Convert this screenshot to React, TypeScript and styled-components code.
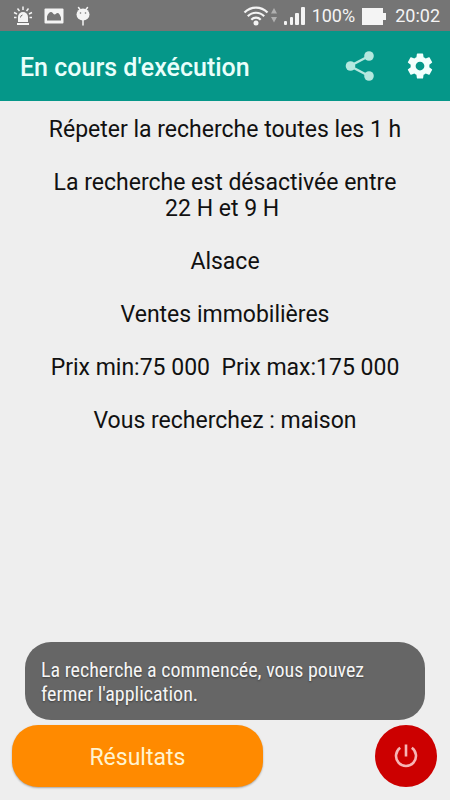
import React from "react";
import styled, { createGlobalStyle } from "styled-components";

const GlobalStyle = createGlobalStyle`
  *, *::before, *::after { box-sizing: border-box; }
  body {
    margin: 0;
    background: #eeeeee;
    font-family: Roboto, "Noto Sans", sans-serif;
  }
`;

const Screen = styled.div`
  position: relative;
  display: flex;
  flex-direction: column;
  min-height: 100vh;
  background: #eeeeee;
`;

const StatusBar = styled.div`
  display: flex;
  align-items: center;
  justify-content: space-between;
  height: 31px;
  padding: 1px 10px 0 13px;
  background: #757575;
  color: #f4f4f4;
  font-size: 18px;
  line-height: 30px;
`;

const StatusGroup = styled.div<{ $gap: number }>`
  display: flex;
  align-items: center;
  gap: ${({ $gap }) => $gap}px;
`;

const StatusText = styled.span<{ $before?: number }>`
  margin-left: ${({ $before = 0 }) => $before}px;
`;

const Glyph = styled.svg`
  display: block;
  flex: none;
`;

const AppBar = styled.header`
  display: flex;
  align-items: center;
  height: 70px;
  padding: 0 10px 0 20px;
  background: #059789;
`;

const Title = styled.h1`
  flex: 1;
  margin: 0;
  padding-top: 4px;
  color: #e9fffb;
  font-size: 25px;
  font-weight: 500;
  line-height: 32px;
`;

const ActionButton = styled.button<{ $tint: string }>`
  display: grid;
  place-items: center;
  width: 40px;
  height: 40px;
  margin-left: 20px;
  padding: 0;
  border: 0;
  background: none;
  color: ${({ $tint }) => $tint};
  cursor: pointer;
`;

const Summary = styled.main`
  display: flex;
  flex: 1;
  flex-direction: column;
  gap: 27px;
  padding: 16px 44px 0;
  color: #111111;
  font-size: 23px;
  line-height: 26px;
  text-align: center;
`;

const Line = styled.p`
  margin: 0;
  white-space: pre-wrap;
`;

const BottomBar = styled.footer`
  display: flex;
  align-items: center;
  justify-content: space-between;
  padding: 0 13px 13px 12px;
`;

const ResultsButton = styled.button`
  width: 59%;
  height: 62px;
  padding: 4px 0 0;
  border: 0;
  border-radius: 26px;
  background: #ff8a00;
  box-shadow: 0 1px 2px rgba(0, 0, 0, 0.3);
  color: #fff3d0;
  font-family: inherit;
  font-size: 23px;
  line-height: 28px;
  cursor: pointer;
`;

const PowerButton = styled.button`
  display: grid;
  place-items: center;
  width: 62px;
  height: 62px;
  padding: 0;
  border: 0;
  border-radius: 50%;
  background: #cc0000;
  color: #f6b5b5;
  cursor: pointer;
`;

const Toast = styled.div`
  position: absolute;
  right: 25px;
  bottom: 80px;
  left: 25px;
  padding: 16px 50px 14px 16px;
  border-radius: 26px;
  background: #666666;
  color: #f5f5f5;
  font-family: "Roboto Condensed", Roboto, sans-serif;
  font-size: 20px;
  line-height: 24px;
  text-shadow: 0 1px 2px rgba(0, 0, 0, 0.4);
`;

const AlarmIcon = () => (
  <Glyph width="20" height="20" viewBox="0 0 20 20" fill="currentColor" aria-hidden="true">
    <path d="M5 16v-5a5 5 0 0 1 10 0v5z" />
    <path d="M4 17h12v2H4z" />
    <path
      d="M10 0.500v3.500M4.500 2.500l2 2.500M15.500 2.500l-2 2.500M1 6.500l3 1.500M19 6.500l-3 1.500M1 11.500h2.500M16.500 11.500H19"
      stroke="currentColor"
      strokeWidth="1.500"
    />
    <path d="M7.500 11.500a2.500 2.500 0 0 1 2-2.500" fill="none" stroke="#757575" />
  </Glyph>
);

const PictureIcon = () => (
  <Glyph width="20" height="16" viewBox="0 0 20 16" aria-hidden="true">
    <rect x="0.500" y="0.500" width="19" height="15" rx="1" fill="currentColor" />
    <path
      d="M3 12.500V8.500C4 5.500 5.500 4 7 4c1.500 0 2 2 3.500 2.500C12 6.500 12 5 13.500 5S16 7 17 9.500v3z"
      fill="#757575"
    />
  </Glyph>
);

const RobotIcon = () => (
  <Glyph width="16" height="20" viewBox="0 0 16 20" aria-hidden="true">
    <path
      d="M3.500 1.500l1.500 2M12.500 1.500l-1.500 2M8 14v5"
      stroke="currentColor"
      strokeWidth="1.500"
      strokeLinecap="round"
    />
    <ellipse cx="8" cy="8.500" rx="6.500" ry="6" fill="currentColor" />
    <circle cx="5.500" cy="7" r="0.800" fill="#757575" />
    <circle cx="10.500" cy="7" r="0.800" fill="#757575" />
  </Glyph>
);

const WifiIcon = () => (
  <Glyph width="34" height="22" viewBox="0 0 34 22" fill="none" aria-hidden="true">
    <path
      d="M1.500 7.500C8 1 18 1 24.500 7.500M4.800 11.200c4.500-4.600 11.900-4.600 16.400 0M8.300 14.700c2.600-2.700 6.800-2.700 9.400 0"
      stroke="currentColor"
      strokeWidth="2.200"
    />
    <circle cx="13" cy="18" r="2.500" fill="currentColor" />
    <path d="M31 3l3 5.500h-6zM31 17.500l3-5.500h-6z" fill="#b0b0b0" />
  </Glyph>
);

const SignalIcon = () => (
  <Glyph width="21" height="18" viewBox="0 0 21 18" fill="currentColor" aria-hidden="true">
    <rect x="0" y="14" width="3" height="4" rx="1" />
    <rect x="6" y="10" width="3" height="8" rx="1" />
    <rect x="11" y="6" width="4" height="12" rx="1" />
    <rect x="17" y="0" width="4" height="18" rx="1" />
  </Glyph>
);

const BatteryIcon = () => (
  <Glyph width="24" height="17" viewBox="0 0 24 17" fill="currentColor" aria-hidden="true">
    <path d="M0 0h21v5h3v7h-3v5H0z" />
  </Glyph>
);

const ShareIcon = () => (
  <Glyph width="30" height="32" viewBox="0 0 30 32" aria-hidden="true">
    <path d="M24 6L5 16l19 10" fill="none" stroke="currentColor" strokeWidth="2.400" />
    <circle cx="5.500" cy="16" r="4.800" fill="currentColor" />
    <circle cx="24" cy="6" r="4.800" fill="currentColor" />
    <circle cx="24" cy="26" r="4.800" fill="currentColor" />
  </Glyph>
);

const GearIcon = () => (
  <Glyph width="30" height="30" viewBox="0 0 24 24" fill="currentColor" aria-hidden="true">
    <path d="M19.430 12.980c.04-.32.07-.64.07-.98s-.03-.66-.07-.98l2.110-1.650c.19-.15.24-.42.12-.64l-2-3.460c-.12-.22-.39-.3-.61-.22l-2.490 1c-.52-.4-1.080-.73-1.690-.98l-.38-2.650C14.460 2.180 14.250 2 14 2h-4c-.25 0-.46.18-.49.42l-.38 2.650c-.61.25-1.170.59-1.690.98l-2.490-1c-.23-.09-.49 0-.61.22l-2 3.460c-.13.22-.07.49.12.64l2.110 1.650c-.04.32-.07.65-.07.98s.03.66.07.98l-2.110 1.650c-.19.15-.24.42-.12.64l2 3.460c.12.22.39.3.61.22l2.490-1c.52.4 1.080.73 1.690.98l.38 2.650c.03.24.24.42.49.42h4c.25 0 .46-.18.49-.42l.38-2.650c.61-.25 1.170-.59 1.690-.98l2.490 1c.23.09.49 0 .61-.22l2-3.460c.12-.22.07-.49-.12-.64l-2.110-1.650zM12 15.500c-1.930 0-3.500-1.570-3.500-3.500s1.570-3.500 3.500-3.500 3.500 1.570 3.500 3.500-1.570 3.500-3.500 3.500z" />
  </Glyph>
);

const PowerIcon = () => (
  <Glyph width="24" height="24" viewBox="0 0 24 24" fill="none" aria-hidden="true">
    <path
      d="M12 0.500v12M6.200 3.800a10 10 0 1 0 11.600 0"
      stroke="currentColor"
      strokeWidth="2.600"
    />
  </Glyph>
);

const criteria = [
  "Répeter la recherche toutes les 1 h",
  "La recherche est désactivée entre 22 H et 9 H\u00a0",
  "Alsace",
  "Ventes immobilières",
  "Prix min:75 000  Prix max:175 000",
  "Vous recherchez : maison",
];

export default function App() {
  return (
    <>
      <GlobalStyle />
      <Screen>
        <StatusBar>
          <StatusGroup $gap={11}>
            <AlarmIcon />
            <PictureIcon />
            <RobotIcon />
          </StatusGroup>
          <StatusGroup $gap={7}>
            <WifiIcon />
            <SignalIcon />
            <StatusText>100%</StatusText>
            <BatteryIcon />
            <StatusText $before={2}>20:02</StatusText>
          </StatusGroup>
        </StatusBar>
        <AppBar>
          <Title>En cours d'exécution</Title>
          <ActionButton type="button" aria-label="Partager" $tint="#b5e8df">
            <ShareIcon />
          </ActionButton>
          <ActionButton type="button" aria-label="Paramètres" $tint="#f4fffd">
            <GearIcon />
          </ActionButton>
        </AppBar>
        <Summary>
          {criteria.map((text) => (
            <Line key={text}>{text}</Line>
          ))}
        </Summary>
        <BottomBar>
          <ResultsButton type="button">Résultats</ResultsButton>
          <PowerButton type="button" aria-label="Arrêter">
            <PowerIcon />
          </PowerButton>
        </BottomBar>
        <Toast role="status">La recherche a commencée, vous pouvez fermer l'application.</Toast>
      </Screen>
    </>
  );
}
